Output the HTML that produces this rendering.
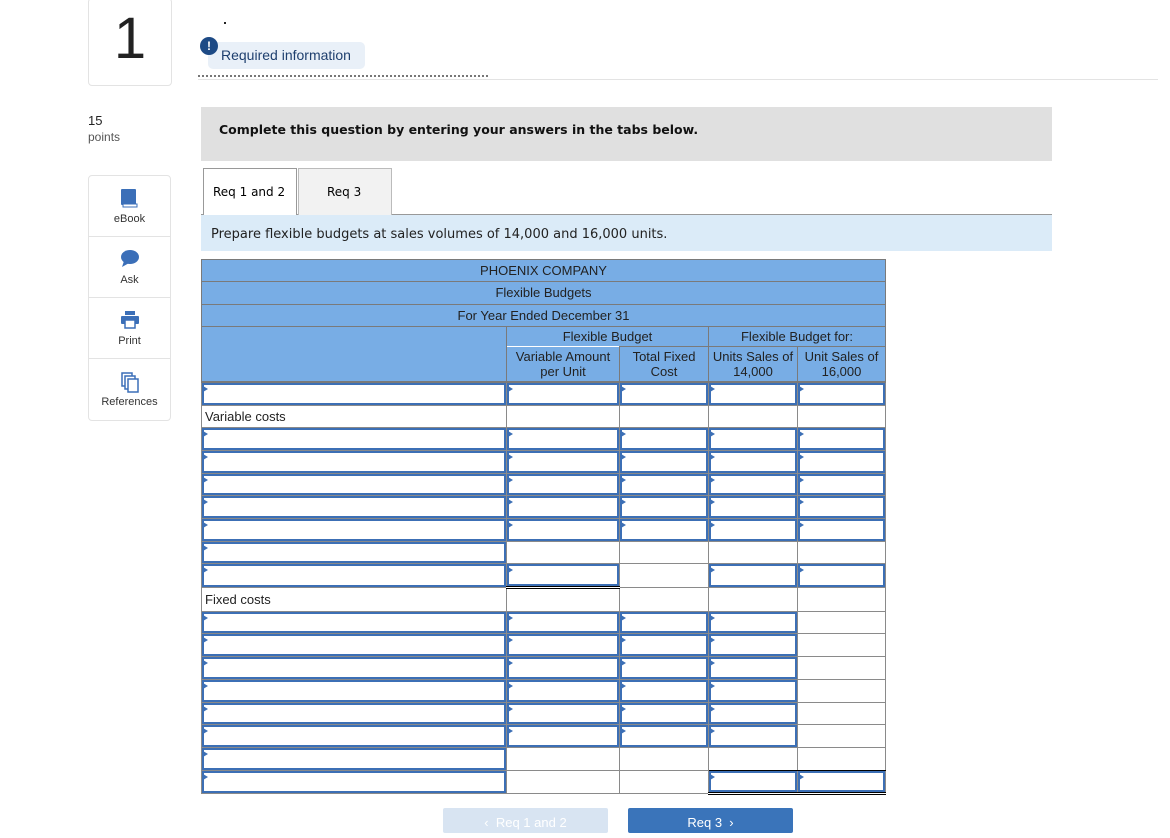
<!DOCTYPE html>
<html><head><meta charset="utf-8"><style>
body{margin:0;width:1170px;height:827px;overflow:hidden;background:#fff;font-family:"Liberation Sans",Arial,sans-serif;position:relative}
.abs{position:absolute}
.numbox{left:88px;top:-2px;width:82px;height:86px;border:1px solid #e3e3e3;border-radius:4px;font-size:58px;color:#222;text-align:center;line-height:80px}
.side{left:88px;top:175px;width:81px;height:244px;border:1px solid #e3e3e3;border-radius:4px}
.side div{height:60px;border-bottom:1px solid #e3e3e3;text-align:center;font-size:11px;color:#333;position:relative}
.side div:last-child{border-bottom:none}
.side span{position:absolute;left:0;right:0;top:37px}
.side svg{position:absolute;left:31px;top:12px}
table{border-collapse:collapse;table-layout:fixed;position:absolute;left:201px;top:259px;font-family:"Liberation Sans",Arial,sans-serif;font-size:13px;color:#222}
td{border:1px solid #8a8a8a;height:21.7px;padding:0;position:relative}
.h td{background:#78ade5;text-align:center;border-color:#7a7a7a}
.i{position:absolute;left:0;top:0;right:0;bottom:0;border:2px solid #3c6fb5}
.i:before{content:"";position:absolute;left:-1px;top:1px;border-left:5px solid #3c6fb5;border-top:3px solid transparent;border-bottom:3px solid transparent}
.lab{padding-left:3px}
</style></head><body>
<div class="abs numbox">1</div>
<div class="abs" style="left:88px;top:113px;font-size:13px;color:#222">15</div>
<div class="abs" style="left:88px;top:130px;font-size:12px;color:#555">points</div>
<div class="abs side">
<div><svg width="18" height="20"><rect x="1" y="1" width="15" height="16" rx="1" fill="#3b6fb8"/><rect x="3" y="16" width="14" height="3" fill="#fff" stroke="#3b6fb8"/></svg><span>eBook</span></div>
<div><svg width="20" height="20"><ellipse cx="10" cy="8" rx="9" ry="7" fill="#3b6fb8"/><path d="M4 12 L2 18 L9 14Z" fill="#3b6fb8"/></svg><span>Ask</span></div>
<div><svg width="20" height="20"><rect x="5" y="1" width="10" height="4" fill="#3b6fb8"/><rect x="1" y="6" width="18" height="8" rx="1" fill="#3b6fb8"/><rect x="5" y="10" width="10" height="8" fill="#fff" stroke="#3b6fb8" stroke-width="1.5"/></svg><span>Print</span></div>
<div><svg width="20" height="22"><rect x="2" y="2" width="10" height="13" fill="#fff" stroke="#3b6fb8" stroke-width="1.5"/><rect x="5" y="5" width="10" height="13" fill="#fff" stroke="#3b6fb8" stroke-width="1.5"/><rect x="8" y="8" width="10" height="13" fill="#fff" stroke="#3b6fb8" stroke-width="1.5"/></svg><span>References</span></div>
</div>
<div class="abs" style="left:224px;top:22px;width:2px;height:2px;background:#222"></div>
<div class="abs" style="left:200px;top:37px;width:18px;height:18px;border-radius:50%;background:#1d4a85;color:#fff;font-size:12px;font-weight:bold;text-align:center;line-height:18px">!</div>
<div class="abs" style="left:208px;top:42px;width:157px;height:27px;background:#e9f0f8;border-radius:5px;z-index:-1"></div>
<div class="abs" style="left:221px;top:47px;font-size:14px;color:#1e3f6e">Required information</div>
<div class="abs" style="left:198px;top:79px;width:960px;height:1px;background:#e3e3e3"></div>
<div class="abs" style="left:198px;top:75px;width:290px;height:2px;border-top:2px dotted #777"></div>
<div class="abs" style="left:201px;top:107px;width:851px;height:54px;background:#e0e0e0"></div>
<div class="abs" style="left:219px;top:122px;font-weight:bold;color:#111;font-family:'DejaVu Sans',sans-serif;font-size:12.5px">Complete this question by entering your answers in the tabs below.</div>
<div class="abs" style="left:201px;top:214px;width:851px;height:1px;background:#999"></div>
<div class="abs" style="left:203px;top:168px;width:92px;height:48px;border:1px solid #999;border-bottom:none;background:#fff"></div>
<div class="abs" style="left:298px;top:168px;width:92px;height:46px;border:1px solid #bbb;background:#f2f2f2"></div>
<div class="abs" style="left:213px;top:185px;font-size:12px;font-family:'DejaVu Sans',sans-serif">Req 1 and 2</div>
<div class="abs" style="left:327px;top:185px;font-size:12px;font-family:'DejaVu Sans',sans-serif">Req 3</div>
<div class="abs" style="left:201px;top:215px;width:851px;height:36px;background:#dbebf8"></div>
<div class="abs" style="left:211px;top:227px;font-size:13px;font-family:'DejaVu Sans',sans-serif;color:#222">Prepare flexible budgets at sales volumes of 14,000 and 16,000 units.</div>

<table>
<colgroup><col style="width:305px"><col style="width:113px"><col style="width:89px"><col style="width:89px"><col style="width:88px"></colgroup>
<tr class="h"><td colspan="5" style="height:21px">PHOENIX COMPANY</td></tr>
<tr class="h"><td colspan="5">Flexible Budgets</td></tr>
<tr class="h"><td colspan="5">For Year Ended December 31</td></tr>
<tr class="h"><td rowspan="2" style="border-bottom:2px solid #7a7a7a"></td><td colspan="2" style="height:19px;border-bottom:none">Flexible Budget</td><td colspan="2" style="height:19px;border-bottom:none">Flexible Budget for:</td></tr>
<tr class="h" style="line-height:15px"><td style="height:34px;border-top:none;border-bottom:2px solid #7a7a7a">Variable Amount per Unit</td><td style="border-bottom:2px solid #7a7a7a">Total Fixed Cost</td><td style="border-bottom:2px solid #7a7a7a">Units Sales of 14,000</td><td style="border-bottom:2px solid #7a7a7a">Unit Sales of 16,000</td></tr>
<tr><td><div class="i"></div></td><td><div class="i"></div></td><td><div class="i"></div></td><td><div class="i"></div></td><td><div class="i"></div></td></tr>
<tr><td class="lab">Variable costs</td><td></td><td></td><td></td><td></td></tr>
<tr><td><div class="i"></div></td><td><div class="i"></div></td><td><div class="i"></div></td><td><div class="i"></div></td><td><div class="i"></div></td></tr>
<tr><td><div class="i"></div></td><td><div class="i"></div></td><td><div class="i"></div></td><td><div class="i"></div></td><td><div class="i"></div></td></tr>
<tr><td><div class="i"></div></td><td><div class="i"></div></td><td><div class="i"></div></td><td><div class="i"></div></td><td><div class="i"></div></td></tr>
<tr><td><div class="i"></div></td><td><div class="i"></div></td><td><div class="i"></div></td><td><div class="i"></div></td><td><div class="i"></div></td></tr>
<tr><td><div class="i"></div></td><td><div class="i"></div></td><td><div class="i"></div></td><td><div class="i"></div></td><td><div class="i"></div></td></tr>
<tr><td><div class="i"></div></td><td style="border-top:1px solid #000"></td><td></td><td style="border-top:1px solid #000"></td><td style="border-top:1px solid #000"></td></tr>
<tr><td><div class="i"></div></td><td style="border-top:1px solid #000;border-bottom:3px double #000"><div class="i" style="border-color:#3c6fb5"></div></td><td></td><td><div class="i"></div></td><td><div class="i"></div></td></tr>
<tr><td class="lab">Fixed costs</td><td></td><td></td><td></td><td></td></tr>
<tr><td><div class="i"></div></td><td><div class="i"></div></td><td><div class="i"></div></td><td><div class="i"></div></td><td></td></tr>
<tr><td><div class="i"></div></td><td><div class="i"></div></td><td><div class="i"></div></td><td><div class="i"></div></td><td></td></tr>
<tr><td><div class="i"></div></td><td><div class="i"></div></td><td><div class="i"></div></td><td><div class="i"></div></td><td></td></tr>
<tr><td><div class="i"></div></td><td><div class="i"></div></td><td><div class="i"></div></td><td><div class="i"></div></td><td></td></tr>
<tr><td><div class="i"></div></td><td><div class="i"></div></td><td><div class="i"></div></td><td><div class="i"></div></td><td></td></tr>
<tr><td><div class="i"></div></td><td><div class="i"></div></td><td><div class="i"></div></td><td><div class="i"></div></td><td></td></tr>
<tr><td><div class="i"></div></td><td></td><td style="border-top:1px solid #000"></td><td style="border-top:1px solid #000;border-bottom:1px solid #000"></td><td style="border-top:1px solid #000;border-bottom:1px solid #000"></td></tr>
<tr><td><div class="i"></div></td><td></td><td style="border-top:1px solid #000"></td><td style="border-bottom:3px double #000"><div class="i"></div></td><td style="border-bottom:3px double #000"><div class="i"></div></td></tr>
</table>

<div class="abs" style="left:443px;top:808px;width:165px;height:25px;background:#d8e4f2;border-radius:2px;color:#fff;font-size:13px;text-align:center;line-height:30px">‹&nbsp; Req 1 and 2</div>
<div class="abs" style="left:628px;top:808px;width:165px;height:25px;background:#3a74ba;border-radius:2px;color:#fff;font-size:13px;text-align:center;line-height:30px">Req 3 &nbsp;›</div>
</body></html>
